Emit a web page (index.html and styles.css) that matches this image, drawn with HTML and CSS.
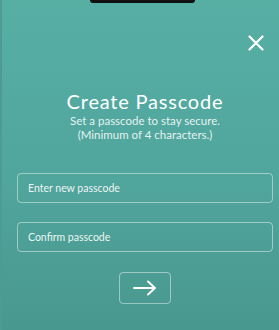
FILE: index.html
```html
<!DOCTYPE html>
<html>
<head>
<meta charset="utf-8">
<link rel="stylesheet" href="styles.css">
</head>
<body>
<div class="screen">
  <div class="notch"></div>
  <div class="close-row">
    <button class="close" aria-label="Close">
      <svg width="16" height="16" viewBox="0 0 16 16"><path d="M1.5 1.5 L14.5 14.5 M14.5 1.5 L1.5 14.5" stroke="#fff" stroke-width="2.2" stroke-linecap="round" fill="none"/></svg>
    </button>
  </div>
  <div class="content">
    <h1 class="title">Create Passcode</h1>
    <p class="sub">Set a passcode to stay secure.<br>(Minimum of 4 characters.)</p>
    <div class="fields">
      <div class="field">Enter new passcode</div>
      <div class="field">Confirm passcode</div>
    </div>
    <button class="next" aria-label="Next">
      <svg width="26" height="16" viewBox="0 0 26 16"><path d="M2 8 H23 M16 1.5 L23 8 L16 14.5" stroke="#fff" stroke-width="2" stroke-linecap="round" stroke-linejoin="round" fill="none"/></svg>
    </button>
  </div>
</div>
</body>
</html>
```
FILE: styles.css
```css
html, body {
  margin: 0;
  padding: 0;
}
body {
  width: 279px;
  height: 330px;
  overflow: hidden;
  font-family: Lato, "Open Sans", sans-serif;
  color: #fff;
}
.screen {
  height: 330px;
  background: linear-gradient(180deg, #57afa4 0%, #50a59c 55%, #49988f 100%);
  border-left: 2px solid #4c9c92;
  box-sizing: border-box;
  display: flex;
  flex-direction: column;
}
.notch {
  width: 105px;
  height: 3px;
  margin-left: 88px;
  background: #111;
  border-radius: 0 0 4px 4px;
}
.close-row {
  display: flex;
  justify-content: flex-end;
  padding: 32px 15px 0 0;
}
.close {
  background: none;
  border: 0;
  padding: 0;
  width: 16px;
  height: 16px;
  display: block;
}
.close svg { display: block; }
.content {
  display: flex;
  flex-direction: column;
  align-items: center;
  padding: 0 6px 0 15px;
}
.title {
  margin: 39px 0 0;
  font-weight: 400;
  font-size: 20px;
  line-height: 22px;
  letter-spacing: 0.8px;
}
.sub {
  margin: 2px 0 0;
  font-size: 11.5px;
  line-height: 13.5px;
  text-align: center;
  color: rgba(255,255,255,0.88);
}
.fields {
  align-self: stretch;
  display: flex;
  flex-direction: column;
  gap: 19px;
  margin-top: 32px;
}
.field {
  height: 30px;
  box-sizing: border-box;
  border: 1px solid rgba(255,255,255,0.45);
  border-radius: 4px;
  padding: 0 10px;
  display: flex;
  align-items: center;
  font-size: 10.5px;
  color: rgba(255,255,255,0.92);
}
.next {
  margin-top: 20px;
  width: 52px;
  height: 32px;
  box-sizing: border-box;
  border: 1px solid rgba(255,255,255,0.45);
  border-radius: 4px;
  background: none;
  display: flex;
  align-items: center;
  justify-content: center;
  padding: 0;
}
.next svg { display: block; }
```
